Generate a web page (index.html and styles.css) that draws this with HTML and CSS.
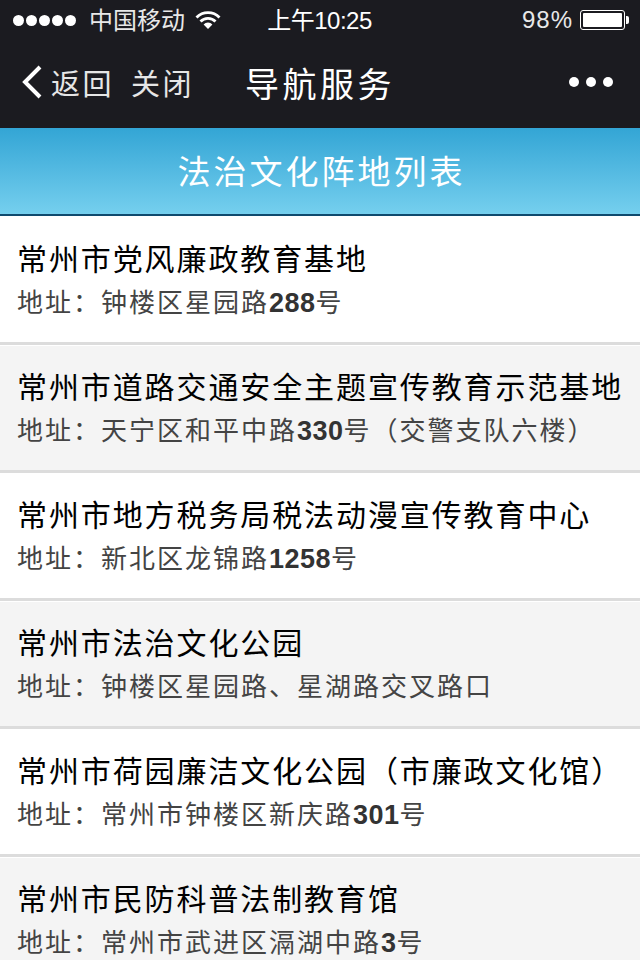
FILE: index.html
```html
<!DOCTYPE html>
<html lang="zh">
<head>
    <meta charset="UTF-8">
    <meta name="viewport" content="width=device-width, initial-scale=1.0">
    <title>导航服务</title>
    <link rel="stylesheet" href="styles.css">
</head>
<body>
    <div class="top-dark">
        <div class="status-bar">
            <div class="status-left">
                <span class="signal"><i></i><i></i><i></i><i></i><i></i></span>
                <span class="carrier">中国移动</span>
                <svg class="wifi" width="26" height="20" viewBox="0 0 26 20">
                    <path d="M1.500 7.500 A16 16 0 0 1 24.500 7.500" fill="none" stroke="#fff" stroke-width="2.800"/>
                    <path d="M5.500 11.500 A10.500 10.500 0 0 1 20.500 11.500" fill="none" stroke="#fff" stroke-width="2.800"/>
                    <path d="M13 19 L8.600 14.400 A6 6 0 0 1 17.400 14.400 Z" fill="#fff"/>
                </svg>
            </div>
            <div class="status-time">上午10:25</div>
            <div class="status-right">
                <span class="percent">98%</span>
                <span class="battery"><span class="battery-fill"></span></span>
                <span class="battery-tip"></span>
            </div>
        </div>
        <div class="nav-bar">
            <div class="nav-left">
                <svg class="back" width="24" height="36" viewBox="0 0 24 36">
                    <path d="M20 3 L5 18 L20 33" fill="none" stroke="#fff" stroke-width="4"/>
                </svg>
                <span class="nav-link">返回</span>
                <span class="nav-link close">关闭</span>
            </div>
            <div class="nav-title">导航服务</div>
            <div class="more"><i></i><i></i><i></i></div>
        </div>
    </div>

    <div class="list-header">法治文化阵地列表</div>

    <ul class="place-list">
        <li class="place">
            <div class="place-name">常州市党风廉政教育基地</div>
            <div class="place-addr">地址：钟楼区星园路<b>288</b>号</div>
        </li>
        <li class="place">
            <div class="place-name">常州市道路交通安全主题宣传教育示范基地</div>
            <div class="place-addr">地址：天宁区和平中路<b>330</b>号（交警支队六楼）</div>
        </li>
        <li class="place">
            <div class="place-name">常州市地方税务局税法动漫宣传教育中心</div>
            <div class="place-addr">地址：新北区龙锦路<b>1258</b>号</div>
        </li>
        <li class="place">
            <div class="place-name">常州市法治文化公园</div>
            <div class="place-addr">地址：钟楼区星园路、星湖路交叉路口</div>
        </li>
        <li class="place">
            <div class="place-name">常州市荷园廉洁文化公园（市廉政文化馆）</div>
            <div class="place-addr">地址：常州市钟楼区新庆路<b>301</b>号</div>
        </li>
        <li class="place">
            <div class="place-name">常州市民防科普法制教育馆</div>
            <div class="place-addr">地址：常州市武进区滆湖中路<b>3</b>号</div>
        </li>
    </ul>
</body>
</html>
```

FILE: styles.css
```css
html, body {
    margin: 0;
    padding: 0;
    height: 960px;
    overflow: hidden;
}
body {
    font-family: "Liberation Sans", "Noto Sans CJK SC", sans-serif;
    background-color: #fff;
    color: #000;
}
.top-dark {
    background-color: #1b1b20;
    color: #fff;
    height: 128px;
}
.status-bar {
    display: flex;
    align-items: center;
    justify-content: space-between;
    height: 40px;
    padding: 0 11px 0 13px;
    font-size: 24px;
    color: #e8e8e8;
}
.status-left, .status-right {
    display: flex;
    align-items: center;
    width: 230px;
    white-space: nowrap;
}
.status-right {
    justify-content: flex-end;
}
.signal {
    display: flex;
    gap: 2px;
}
.signal i {
    width: 11px;
    height: 11px;
    border-radius: 50%;
    background-color: #fff;
}
.carrier {
    margin: -3px 0 0 13px;
}
.wifi {
    margin-left: 10px;
}
.status-time {
    margin: -3px 3px 0 0;
    color: #fff;
    white-space: nowrap;
    letter-spacing: -0.500px;
}
.percent {
    margin-right: 7px;
    letter-spacing: 1px;
}
.battery {
    display: block;
    width: 39px;
    height: 14px;
    border: 1px solid #fff;
    border-radius: 3px;
    padding: 2px;
}
.battery-fill {
    display: block;
    height: 100%;
    background-color: #fff;
    border-radius: 1px;
}
.battery-tip {
    width: 3px;
    height: 8px;
    margin-left: 1px;
    background-color: #fff;
    border-radius: 0 2px 2px 0;
}
.nav-bar {
    display: flex;
    align-items: center;
    height: 88px;
    padding: 0 27px 4px 20px;
    box-sizing: border-box;
}
.nav-left {
    display: flex;
    align-items: center;
    width: 225px;
}
.back {
    margin-right: 7px;
}
.nav-link {
    font-size: 29px;
    letter-spacing: 2.500px;
    color: #e6e6e6;
}
.close {
    margin-left: 17px;
}
.nav-title {
    flex: 1;
    font-size: 34px;
    letter-spacing: 3.500px;
}
.more {
    display: flex;
    gap: 7px;
}
.more i {
    width: 10px;
    height: 10px;
    border-radius: 50%;
    background-color: #fff;
}
.list-header {
    height: 88px;
    box-sizing: border-box;
    padding-left: 3px;
    border-bottom: 2px solid #0f4a6e;
    background: linear-gradient(#33a5d5, #75cfee);
    color: #fff;
    font-size: 33px;
    letter-spacing: 3px;
    line-height: 90px;
    text-align: center;
}
.place-list {
    list-style: none;
    margin: 0;
    padding: 1px 0 0;
}
.place {
    height: 128px;
    box-sizing: border-box;
    padding: 23px 0 0 17px;
    border-top: 1px solid #fff;
    border-bottom: 3px solid #dcdcdc;
    background-color: #fff;
}
.place:nth-child(even) {
    background-color: #f4f4f4;
}
.place-name {
    font-size: 30px;
    line-height: 38px;
    letter-spacing: 1.900px;
    white-space: nowrap;
}
.place-addr {
    margin-top: 6px;
    font-size: 26px;
    line-height: 36px;
    letter-spacing: 2px;
    color: #444;
    white-space: nowrap;
}
.place-addr b {
    font-size: 27px;
    letter-spacing: 0.500px;
    color: #333;
}
```
